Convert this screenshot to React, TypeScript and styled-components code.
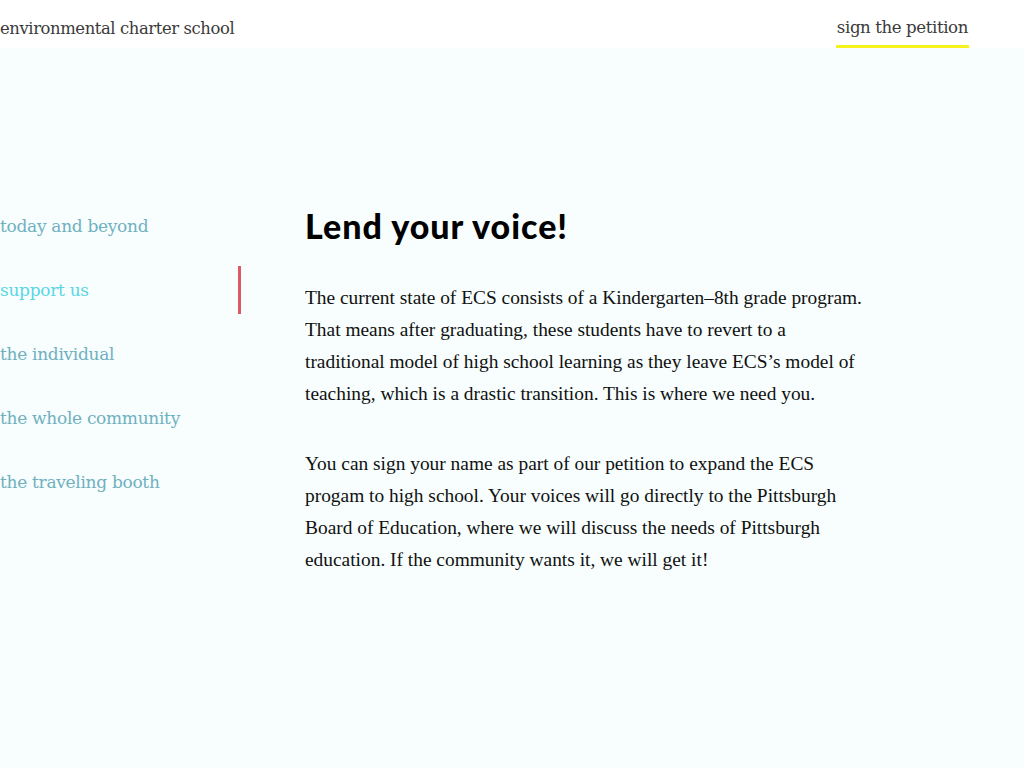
import React from 'react'
import styled, { createGlobalStyle } from 'styled-components'

const GlobalStyle = createGlobalStyle`
  html, body {
    margin: 0;
    padding: 0;
    background: #f7fefd;
  }
  #root {
    min-height: 768px;
  }
`

const Header = styled.header`
  height: 48px;
  background: #ffffff;
  display: flex;
  align-items: flex-start;
  justify-content: space-between;
  padding: 0 55px 0 0;
  font-family: 'DejaVu Serif', serif;
  color: #3a3a3a;
`

const Brand = styled.a`
  font-size: 16.4px;
  letter-spacing: -0.4px;
  text-decoration: none;
  color: inherit;
  height: 48px;
  display: flex;
  align-items: center;
  padding-top: 8px;
  box-sizing: border-box;
`

const PetitionLink = styled.a`
  font-size: 16.6px;
  letter-spacing: -0.4px;
  color: inherit;
  text-decoration: none;
  height: 48px;
  box-sizing: border-box;
  padding: 18px 1px 0;
  border-bottom: 3px solid #f7f21e;
`

const Main = styled.main`
  display: flex;
  gap: 64px;
  padding-top: 154px;
  min-height: 566px;
`

const SideNav = styled.nav`
  width: 241px;
  display: flex;
  flex-direction: column;
  gap: 16px;
  flex-shrink: 0;
`

const NavItem = styled.a<{ $active?: boolean }>`
  height: 48px;
  display: flex;
  align-items: center;
  font-family: 'DejaVu Serif', serif;
  font-size: 17px;
  letter-spacing: -0.3px;
  text-decoration: none;
  color: ${({ $active }) => ($active ? '#5ad6e4' : '#70b0c0')};
  border-right: 3px solid ${({ $active }) => ($active ? '#df5962' : 'transparent')};
  box-sizing: border-box;
`

const Content = styled.section`
  width: 561px;
  padding-top: 4px;
`

const Title = styled.h1`
  margin: 0 0 36px;
  font-family: 'Lato', sans-serif;
  font-weight: 900;
  font-size: 34px;
  line-height: 40px;
  letter-spacing: 1px;
  color: #000000;
`

const Paragraph = styled.p`
  margin: 0 0 38px;
  font-family: 'Liberation Serif', serif;
  font-size: 19.4px;
  line-height: 32px;
  color: #111111;
`

const navItems = [
  'today and beyond',
  'support us',
  'the individual',
  'the whole community',
  'the traveling booth',
]

export default function App() {
  return (
    <>
      <GlobalStyle />
      <Header>
        <Brand href="#">environmental charter school</Brand>
        <PetitionLink href="#">sign the petition</PetitionLink>
      </Header>
      <Main>
        <SideNav>
          {navItems.map((item) => (
            <NavItem key={item} href="#" $active={item === 'support us'}>
              {item}
            </NavItem>
          ))}
        </SideNav>
        <Content>
          <Title>Lend your voice!</Title>
          <Paragraph>
            The current state of ECS consists of a Kindergarten–8th grade program. That means after
            graduating, these students have to revert to a traditional model of high school learning
            as they leave ECS’s model of teaching, which is a drastic transition. This is where we
            need you.
          </Paragraph>
          <Paragraph>
            You can sign your name as part of our petition to expand the ECS progam to high school.
            Your voices will go directly to the Pittsburgh Board of Education, where we will discuss
            the needs of Pittsburgh education. If the community wants it, we will get it!
          </Paragraph>
        </Content>
      </Main>
    </>
  )
}
